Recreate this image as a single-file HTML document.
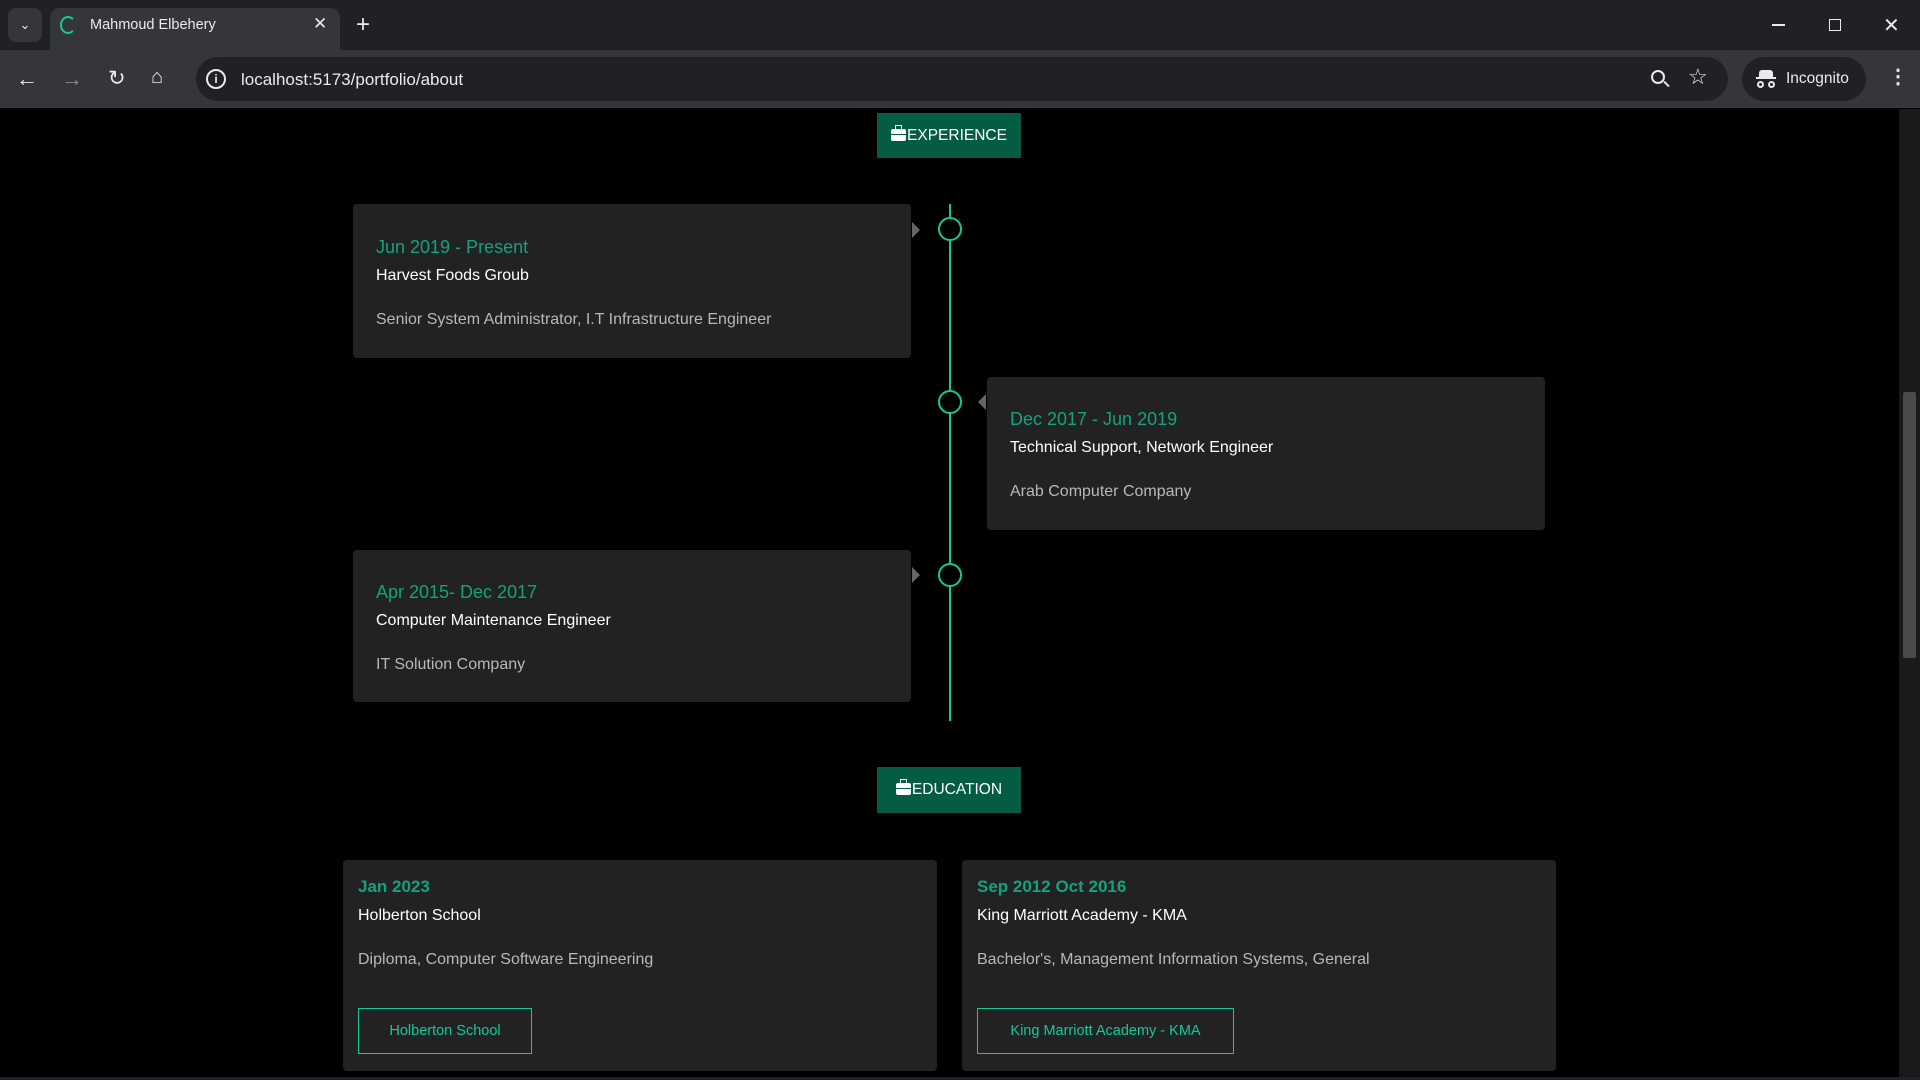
<!DOCTYPE html>
<html><head><meta charset="utf-8"><style>
*{margin:0;padding:0;box-sizing:border-box}
body{width:1920px;height:1080px;background:#000;font-family:"Liberation Sans",sans-serif;position:relative;overflow:hidden}
.abs{position:absolute}
.tabbar{left:0;top:0;width:1920px;height:50px;background:#202124}
.toolbar{left:0;top:50px;width:1920px;height:58px;background:#35363a;border-bottom:1px solid #3c3c3c}
.tab{left:50px;top:8px;width:290px;height:42px;background:#35363a;border-radius:10px 10px 0 0}
.url{left:196px;top:57px;width:1532px;height:44px;background:#202124;border-radius:22px}
.inc{left:1742px;top:57px;width:124px;height:44px;background:#202124;border-radius:22px}
.t{color:#e8eaed;font-size:15px}
.card{background:#222;border-radius:4px}
.date{color:#12a37e;font-size:18px}
.title{color:#fff;font-size:16px}
.desc{color:#b8b8b8;font-size:16px}
.btn{background:#045c45;color:#fff;font-size:15.5px;display:flex;align-items:center;justify-content:center}
.bc{display:inline-block;width:15px;height:12px;background:#fff;border-radius:2px;position:relative;margin-right:1px;top:-1px}
.bc:before{content:"";position:absolute;left:4px;top:-4px;width:5px;height:3px;border:1.5px solid #fff;border-bottom:none}
.bc:after{content:"";position:absolute;left:0;top:5px;width:15px;height:1px;background:#045c45}
.circle{width:24px;height:24px;border:2px solid #12c99a;border-radius:50%;background:#000}
</style></head><body>
<div class="abs tabbar"></div>
<div class="abs" style="left:8px;top:8px;width:34px;height:34px;background:#35363a;border-radius:8px;color:#e8eaed;font-size:13px;text-align:center;line-height:34px">&#8964;</div>
<div class="abs tab"></div>
<div class="abs" style="left:60px;top:16px;width:16px;height:18px;border:2px solid #12c99a;border-radius:50%;border-right-color:transparent"></div>
<div class="abs t" style="left:90px;top:17px;font-size:14.5px">Mahmoud Elbehery</div>
<div class="abs t" style="left:313px;top:14px;font-size:17px">✕</div>
<div class="abs t" style="left:356px;top:11px;font-size:24px">+</div>
<div class="abs" style="left:1772px;top:24px;width:13px;height:1.5px;background:#e8eaed"></div>
<div class="abs" style="left:1829px;top:19px;width:12px;height:12px;border:1.5px solid #e8eaed"></div>
<div class="abs t" style="left:1883px;top:13px;font-size:20px">✕</div>
<div class="abs toolbar"></div>
<div class="abs t" style="left:16px;top:66px;font-size:22px">←</div>
<div class="abs t" style="left:61px;top:66px;font-size:22px;color:#8a8b8d">→</div>
<div class="abs t" style="left:108px;top:66px;font-size:21px">↻</div>
<div class="abs t" style="left:151px;top:66px;font-size:20px">⌂</div>
<div class="abs url"></div>
<div class="abs" style="left:206px;top:69px;width:20px;height:20px;border:2px solid #e8eaed;border-radius:50%;color:#e8eaed;font-size:12px;text-align:center;line-height:16px;font-weight:bold">i</div>
<div class="abs t" style="left:241px;top:70px;font-size:17px">localhost:5173/portfolio/about</div>
<div class="abs" style="left:1651px;top:70px;width:14px;height:14px;border:2px solid #e8eaed;border-radius:50%"></div>
<div class="abs" style="left:1663px;top:83px;width:7px;height:2px;background:#e8eaed;transform:rotate(45deg)"></div>
<div class="abs t" style="left:1688px;top:64px;font-size:22px">☆</div>
<div class="abs inc"></div>
<div class="abs" style="left:1759px;top:70px;width:14px;height:7px;background:#e8eaed;border-radius:3px 3px 0 0"></div>
<div class="abs" style="left:1756px;top:77px;width:20px;height:2px;background:#e8eaed"></div>
<div class="abs" style="left:1757px;top:81px;width:7px;height:7px;border:2px solid #e8eaed;border-radius:50%"></div>
<div class="abs" style="left:1768px;top:81px;width:7px;height:7px;border:2px solid #e8eaed;border-radius:50%"></div>
<div class="abs t" style="left:1786px;top:70px;font-size:15.5px">Incognito</div>
<div class="abs t" style="left:1888px;top:64px;font-size:20px;font-weight:bold">⋮</div>

<div class="abs" style="left:1899px;top:109px;width:21px;height:971px;background:#1a1a1a"></div>
<div class="abs" style="left:1903px;top:392px;width:13px;height:266px;background:#4a4a4a;border-radius:2px"></div>

<div class="abs btn" style="left:877px;top:113px;width:144px;height:45px"><span class="bc"></span>EXPERIENCE</div>
<div class="abs" style="left:949px;top:204px;width:2px;height:517px;background:#12c99a"></div>

<div class="abs card" style="left:353px;top:204px;width:558px;height:154px"></div>
<div class="abs date" style="left:376px;top:237px">Jun 2019 - Present</div>
<div class="abs title" style="left:376px;top:267px">Harvest Foods Groub</div>
<div class="abs desc" style="left:376px;top:311px">Senior System Administrator, I.T Infrastructure Engineer</div>
<div class="abs" style="left:912px;top:222px;border-left:8px solid #666;border-top:8px solid transparent;border-bottom:8px solid transparent"></div>
<div class="abs circle" style="left:938px;top:217px"></div>

<div class="abs card" style="left:987px;top:377px;width:558px;height:153px"></div>
<div class="abs date" style="left:1010px;top:409px">Dec 2017 - Jun 2019</div>
<div class="abs title" style="left:1010px;top:439px">Technical Support, Network Engineer</div>
<div class="abs desc" style="left:1010px;top:483px">Arab Computer Company</div>
<div class="abs" style="left:978px;top:394px;border-right:8px solid #666;border-top:8px solid transparent;border-bottom:8px solid transparent"></div>
<div class="abs circle" style="left:938px;top:390px"></div>

<div class="abs card" style="left:353px;top:550px;width:558px;height:152px"></div>
<div class="abs date" style="left:376px;top:582px">Apr 2015- Dec 2017</div>
<div class="abs title" style="left:376px;top:612px">Computer Maintenance Engineer</div>
<div class="abs desc" style="left:376px;top:656px">IT Solution Company</div>
<div class="abs" style="left:912px;top:567px;border-left:8px solid #666;border-top:8px solid transparent;border-bottom:8px solid transparent"></div>
<div class="abs circle" style="left:938px;top:563px"></div>

<div class="abs btn" style="left:877px;top:767px;width:144px;height:46px"><span class="bc"></span>EDUCATION</div>

<div class="abs card" style="left:343px;top:860px;width:594px;height:211px"></div>
<div class="abs date" style="left:358px;top:877px;font-weight:bold;font-size:17px">Jan 2023</div>
<div class="abs title" style="left:358px;top:907px">Holberton School</div>
<div class="abs desc" style="left:358px;top:951px">Diploma, Computer Software Engineering</div>
<div class="abs" style="left:358px;top:1008px;width:174px;height:46px;border:1.5px solid #12c99a;color:#12c99a;font-size:14.5px;display:flex;align-items:center;justify-content:center">Holberton School</div>

<div class="abs card" style="left:962px;top:860px;width:594px;height:211px"></div>
<div class="abs date" style="left:977px;top:877px;font-weight:bold;font-size:17px">Sep 2012 Oct 2016</div>
<div class="abs title" style="left:977px;top:907px">King Marriott Academy - KMA</div>
<div class="abs desc" style="left:977px;top:951px">Bachelor's, Management Information Systems, General</div>
<div class="abs" style="left:977px;top:1008px;width:257px;height:46px;border:1.5px solid #12c99a;color:#12c99a;font-size:14.5px;display:flex;align-items:center;justify-content:center">King Marriott Academy - KMA</div>
<div class="abs" style="left:0;top:1077px;width:1920px;height:3px;background:#202124"></div>
</body></html>
